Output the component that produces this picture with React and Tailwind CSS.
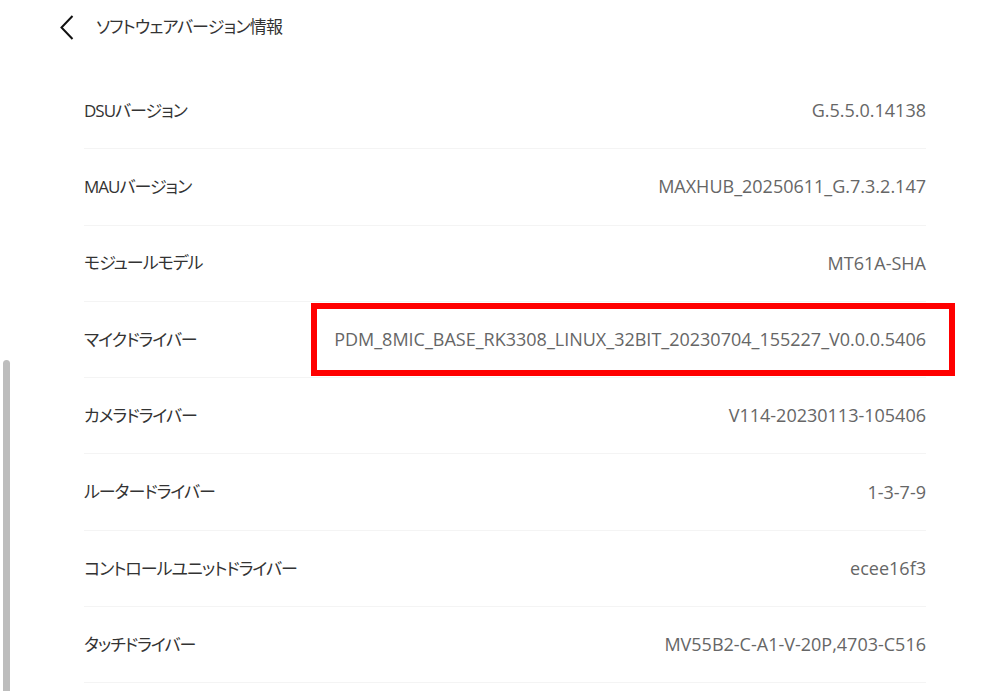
import React from 'react';

const rows = [
  { label: 'DSUバージョン', value: 'G.5.5.0.14138' },
  { label: 'MAUバージョン', value: 'MAXHUB_20250611_G.7.3.2.147' },
  { label: 'モジュールモデル', value: 'MT61A-SHA' },
  { label: 'マイクドライバー', value: 'PDM_8MIC_BASE_RK3308_LINUX_32BIT_20230704_155227_V0.0.0.5406', marked: true },
  { label: 'カメラドライバー', value: 'V114-20230113-105406' },
  { label: 'ルータードライバー', value: '1-3-7-9' },
  { label: 'コントロールユニットドライバー', value: 'ecee16f3' },
  { label: 'タッチドライバー', value: 'MV55B2-C-A1-V-20P,4703-C516' },
];

const App = () => {
  return (
    <div
      className="relative w-[997px] h-[691px] overflow-hidden bg-white [font-family:'Open_Sans','Noto_Sans_CJK_JP',sans-serif] [font-feature-settings:'palt']"
    >
      {/* header */}
      <div className="flex items-center h-[54px] pl-[60px]">
        <svg width="14" height="25" viewBox="0 0 14 25" fill="none">
          <path d="M12.5 1 L1.5 12.5 L12.5 24" stroke="#111" strokeWidth="2" />
        </svg>
        <span className="ml-[22px] text-[17px] tracking-[-0.8px] text-[#333]">ソフトウェアバージョン情報</span>
      </div>

      {/* list */}
      <div className="mt-[19px] ml-[84px] w-[842px]">
        {rows.map((row) => (
          <div
            key={row.label}
            className="relative flex items-center justify-between h-[76.3px] border-b border-[#f4f4f4]"
          >
            <span className="text-[17px] tracking-[-1px] text-[#333]">{row.label}</span>
            <span className="text-[18px] text-[#666]">{row.value}</span>
            {row.marked && (
              <div className="absolute left-[227px] right-[-29px] top-[1px] bottom-[1px] border-[6px] border-[#ff0000]" />
            )}
          </div>
        ))}
      </div>

      {/* scrollbar */}
      <div className="absolute left-[3px] top-[360px] w-[7px] h-[340px] rounded-t-full bg-[#bdbdbd]" />
    </div>
  );
};

export default App;
